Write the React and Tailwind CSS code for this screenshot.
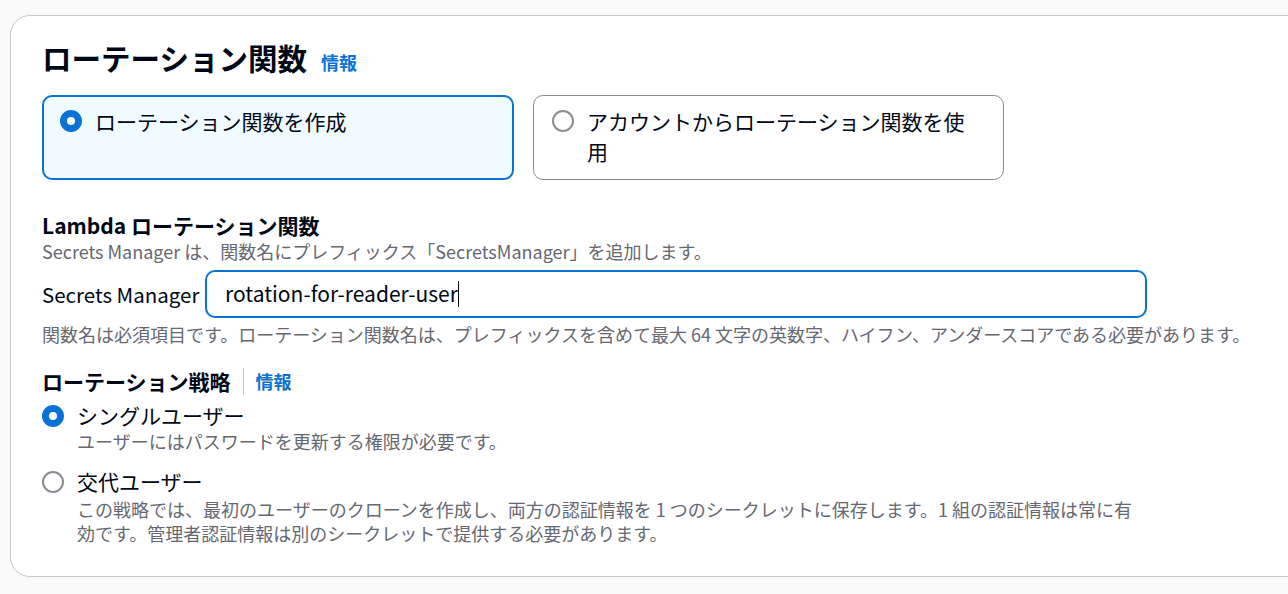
import React from "react";

function Radio({ checked }) {
  return checked ? (
    <span className="shrink-0 w-[22px] h-[22px] rounded-full border-[7px] border-[#0972d3] bg-white" />
  ) : (
    <span className="shrink-0 w-[22px] h-[22px] rounded-full border-2 border-[#8c8c94] bg-white" />
  );
}

function Tile({ checked, label }) {
  return (
    <div
      className={`h-[85px] rounded-[10px] flex items-start gap-[13px] ${
        checked
          ? "border-2 border-[#0972d3] bg-[#f0fbff] pl-[16px] pr-[26px] pt-[9px]"
          : "border border-[#8c8c94] bg-white pl-[18px] pr-[27px] pt-[10px]"
      }`}
    >
      <span className="mt-[4px] flex">
        <Radio checked={checked} />
      </span>
      <span className="text-[21px] leading-[30px] text-[#000716]">{label}</span>
    </div>
  );
}

function Info() {
  return <a className="text-[18px] font-bold text-[#0972d3]">情報</a>;
}

export default function App() {
  return (
    <div className="w-[1288px] h-[594px] overflow-hidden bg-[#fafafa] pt-[15px] pl-[10px] font-['Noto_Sans_CJK_JP',sans-serif] text-[#000716]">
      <div className="w-[1320px] bg-white border border-[#c6c6cd] rounded-[20px] pl-[31px] pt-[23px] pb-[31px]">
        {/* header */}
        <div className="flex items-baseline gap-[14px] h-[36px]">
          <h2 className="text-[29.5px] leading-[36px] font-bold">ローテーション関数</h2>
          <Info />
        </div>

        {/* source tiles */}
        <div className="grid grid-cols-[472px_471px] gap-[19px] mt-[20px]">
          <Tile checked label="ローテーション関数を作成" />
          <Tile label="アカウントからローテーション関数を使用" />
        </div>

        {/* lambda name */}
        <div className="mt-[31px]">
          <div className="text-[21px] leading-[28px] font-bold">Lambda ローテーション関数</div>
          <div className="text-[18px] leading-[24px] text-[#656871]">
            Secrets Manager は、関数名にプレフィックス「SecretsManager」を追加します。
          </div>
          <div className="flex items-center mt-[7px]">
            <span className="text-[20.5px] w-[163px]">Secrets Manager</span>
            <div className="w-[942px] h-[48px] rounded-[10px] border-2 border-[#0972d3] flex items-center pl-[18px]">
              <span className="text-[21px]">rotation-for-reader-user</span>
              <span className="w-px h-[26px] bg-black" />
            </div>
          </div>
          <div className="text-[18px] leading-[24px] text-[#656871] mt-[4px]">
            関数名は必須項目です。ローテーション関数名は、プレフィックスを含めて最大 64 文字の英数字、ハイフン、アンダースコアである必要があります。
          </div>
        </div>

        {/* strategy */}
        <div className="mt-[21px]">
          <div className="flex items-center h-[28px]">
            <span className="text-[21px] leading-[28px] font-bold">ローテーション戦略</span>
            <span className="w-px h-[27px] bg-[#c6c6cd] mx-[12px]" />
            <Info />
          </div>
          <div className="flex gap-[13px] mt-[6px]">
            <span className="mt-[4px] flex">
              <Radio checked />
            </span>
            <div>
              <div className="text-[21px] leading-[28px]">シングルユーザー</div>
              <div className="text-[18px] leading-[24px] text-[#656871]">
                ユーザーにはパスワードを更新する権限が必要です。
              </div>
            </div>
          </div>
          <div className="flex gap-[13px] mt-[14px]">
            <span className="mt-[4px] flex">
              <Radio />
            </span>
            <div className="w-[1072px]">
              <div className="text-[21px] leading-[28px]">交代ユーザー</div>
              <div className="text-[18px] leading-[24px] text-[#656871] pt-[2px]">
                この戦略では、最初のユーザーのクローンを作成し、両方の認証情報を 1 つのシークレットに保存します。1 組の認証情報は常に有効です。管理者認証情報は別のシークレットで提供する必要があります。
              </div>
            </div>
          </div>
        </div>
      </div>
    </div>
  );
}
